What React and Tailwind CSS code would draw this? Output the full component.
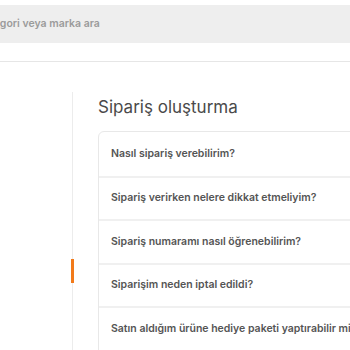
const questions = [
  "Nasıl sipariş verebilirim?",
  "Sipariş verirken nelere dikkat etmeliyim?",
  "Sipariş numaramı nasıl öğrenebilirim?",
  "Siparişim neden iptal edildi?",
  "Satın aldığım ürüne hediye paketi yaptırabilir miyim?",
];

export default function App() {
  return (
    <div className="h-[350px] w-[350px] overflow-hidden bg-white font-['Inter',sans-serif]">
      {/* search bar, cropped at the left */}
      <div className="pt-[5px]">
        <div className="flex h-[38px] items-center overflow-hidden bg-[#eeeeee]">
          <span className="-ml-[22px] whitespace-nowrap text-[10.5px] font-semibold text-[#9b9b9b]">
            kategori veya marka ara
          </span>
        </div>
      </div>
      <div className="mt-[18px] border-b border-[#e6e6e6]" />

      <div className="mt-[30px] flex">
        <div className="w-[72px] shrink-0" />
        <div className="relative flex-1 border-l border-[#ececec] pl-[25px]">
          <span className="absolute -left-[2px] top-[167px] h-[24px] w-[3px] bg-[#f27a1a]" />
          <h2 className="pt-[3px] text-[17px] leading-[24px] text-[#4a4a4a]">Sipariş oluşturma</h2>
          <div className="mt-[12px] w-[300px] rounded-tl-[6px] border border-[#e8e8e8]">
            {questions.map((q, i) => (
              <div
                key={i}
                className={`flex h-[43.5px] items-center whitespace-nowrap px-[12px] text-[10.5px] font-semibold text-[#555555] ${
                  i > 0 ? "border-t-2 border-[#f0f0f0]" : ""
                }`}
              >
                {q}
              </div>
            ))}
          </div>
        </div>
      </div>
    </div>
  );
}
